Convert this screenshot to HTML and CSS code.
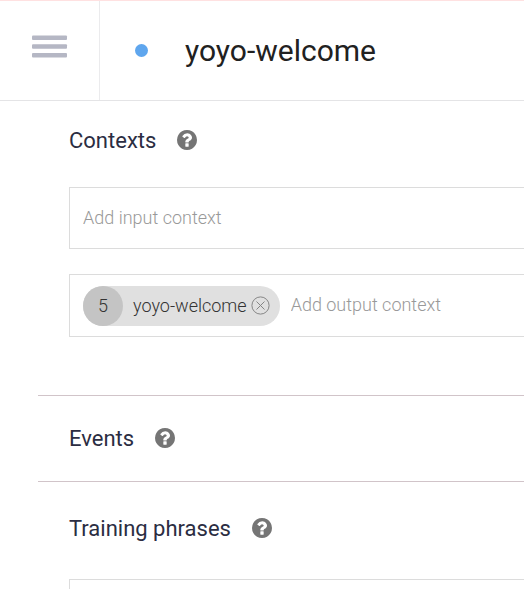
FILE: index.html
```html
<!DOCTYPE html>
<html lang="en">
<head>
<meta charset="utf-8">
<meta name="viewport" content="width=device-width, initial-scale=1">
<title>yoyo-welcome</title>
<link rel="stylesheet" href="styles.css">
</head>
<body>
<svg class="defs" aria-hidden="true">
  <symbol id="question" viewBox="128 128 1536 1536">
    <path d="M1024 1376v-192q0-14-9-23t-23-9h-192q-14 0-23 9t-9 23v192q0 14 9 23t23 9h192q14 0 23-9t9-23zm256-672q0-88-55.500-163t-138.500-116-170-41q-243 0-371 213-15 24 8 42l132 100q7 6 19 6 16 0 25-12 53-68 86-92 34-24 86-24 48 0 85.500 26t37.500 59q0 38-20 61t-68 45q-63 28-115.500 86.500t-52.500 125.500v36q0 14 9 23t23 9h192q14 0 23-9t9-23q0-19 21.500-49.500t54.500-49.500q32-18 49-28.500t46-35 44.500-48 28-60.500 12.500-81zm384 192q0 209-103 385.500t-279.500 279.500-385.500 103-385.500-103-279.500-279.500-103-385.500 103-385.500 279.500-279.500 385.500-103 385.500 103 279.500 279.500 103 385.500z"/>
  </symbol>
</svg>
<header class="header">
  <button class="menu" type="button" aria-label="Menu">
    <svg width="36" height="24" viewBox="0 0 36 24"><rect y="0.500" width="35" height="4.500" rx="1"/><rect y="9.250" width="35" height="4.500" rx="1"/><rect y="18" width="35" height="4.500" rx="1"/></svg>
  </button>
  <span class="status"></span>
  <input class="title" type="text" value="yoyo-welcome" aria-label="Intent name">
</header>
<main class="content">
  <section class="section contexts">
    <div class="heading">
      <h2>Contexts</h2>
      <button class="help" type="button" aria-label="About contexts"><svg><use href="#question"/></svg></button>
    </div>
    <div class="field">
      <input type="text" placeholder="Add input context" aria-label="Add input context">
    </div>
    <div class="field">
      <div class="chip">
        <span class="lifespan">5</span>
        <span class="name">yoyo-welcome</span>
        <button class="remove" type="button" aria-label="Remove yoyo-welcome">
          <svg viewBox="0 0 19 19"><circle cx="9.500" cy="9.500" r="8.600"/><path d="M5.500 5.500l8 8M13.500 5.500l-8 8"/></svg>
        </button>
      </div>
      <input type="text" placeholder="Add output context" aria-label="Add output context">
    </div>
  </section>
  <section class="section events">
    <div class="heading">
      <h2>Events</h2>
      <button class="help" type="button" aria-label="About events"><svg><use href="#question"/></svg></button>
    </div>
  </section>
  <section class="section training">
    <div class="heading">
      <h2>Training phrases</h2>
      <button class="help" type="button" aria-label="About training phrases"><svg><use href="#question"/></svg></button>
    </div>
    <div class="field"></div>
  </section>
</main>
</body>
</html>
```
FILE: styles.css
```css
* {
  box-sizing: border-box;
}

body {
  display: flex;
  flex-direction: column;
  margin: 0;
  height: 100vh;
  background: #fff;
  color: #2b2d42;
  font-family: Roboto, sans-serif;
}

button,
input {
  margin: 0;
  padding: 0;
  border: 0;
  background: none;
  font: inherit;
  color: inherit;
}

input {
  flex: 1;
  min-width: 0;
  outline: none;
}

svg {
  display: block;
}

.defs {
  display: none;
}

.header {
  display: flex;
  flex: none;
  align-items: center;
  height: 101px;
  border-top: 1px solid #ffe1e1;
  border-bottom: 1px solid #e4e4e6;
}

.menu {
  display: flex;
  align-items: center;
  align-self: stretch;
  width: 100px;
  padding: 0 0 8px 32px;
  border-right: 1px solid #ebebed;
  fill: #b5b7c4;
}

.status {
  width: 13px;
  height: 13px;
  margin: 0 37px 0 35px;
  border-radius: 50%;
  background: #5fa6ee;
}

.title {
  height: 40px;
  font-size: 30px;
  color: #212121;
}

.content {
  flex: 1;
  min-height: 0;
  overflow: hidden;
}

.section {
  margin-left: 38px;
  padding-left: 31px;
}

.contexts {
  padding-top: 24px;
  padding-bottom: 58px;
}

.events {
  padding-top: 27px;
  padding-bottom: 27px;
  border-top: 1px solid #d1c4c9;
  border-bottom: 1px solid #d1c4c9;
}

.training {
  padding-top: 31px;
}

.heading {
  display: flex;
  align-items: center;
  gap: 21px;
  height: 31px;
}

h2 {
  margin: 0;
  font-size: 22px;
  font-weight: 400;
}

.help {
  padding-bottom: 1px;
}

.help svg {
  width: 20px;
  height: 20px;
  fill: #757575;
}

.field {
  display: flex;
  align-items: center;
  gap: 11px;
  height: 62px;
  padding-left: 13px;
  border: 1px solid #dcdcdc;
  border-right: 0;
  font-size: 18px;
  font-weight: 300;
}

.field + .field {
  height: 63px;
  margin-top: 25px;
}

.heading + .field {
  margin-top: 31px;
}

.training .field {
  margin-top: 35px;
}

.field input {
  height: 40px;
  padding-bottom: 2px;
}

.field input::placeholder {
  color: #999;
  opacity: 1;
}

.chip {
  display: flex;
  align-items: center;
  height: 40px;
  padding-right: 10px;
  border-radius: 20px;
  background: #e0e0e0;
  color: #333;
}

.lifespan {
  width: 40px;
  margin-right: 10px;
  border-radius: 50%;
  background: #c4c4c4;
  line-height: 40px;
  text-align: center;
}

.remove {
  margin-left: 4px;
}

.remove svg {
  width: 19px;
  height: 19px;
  fill: none;
  stroke: #858585;
}
```
